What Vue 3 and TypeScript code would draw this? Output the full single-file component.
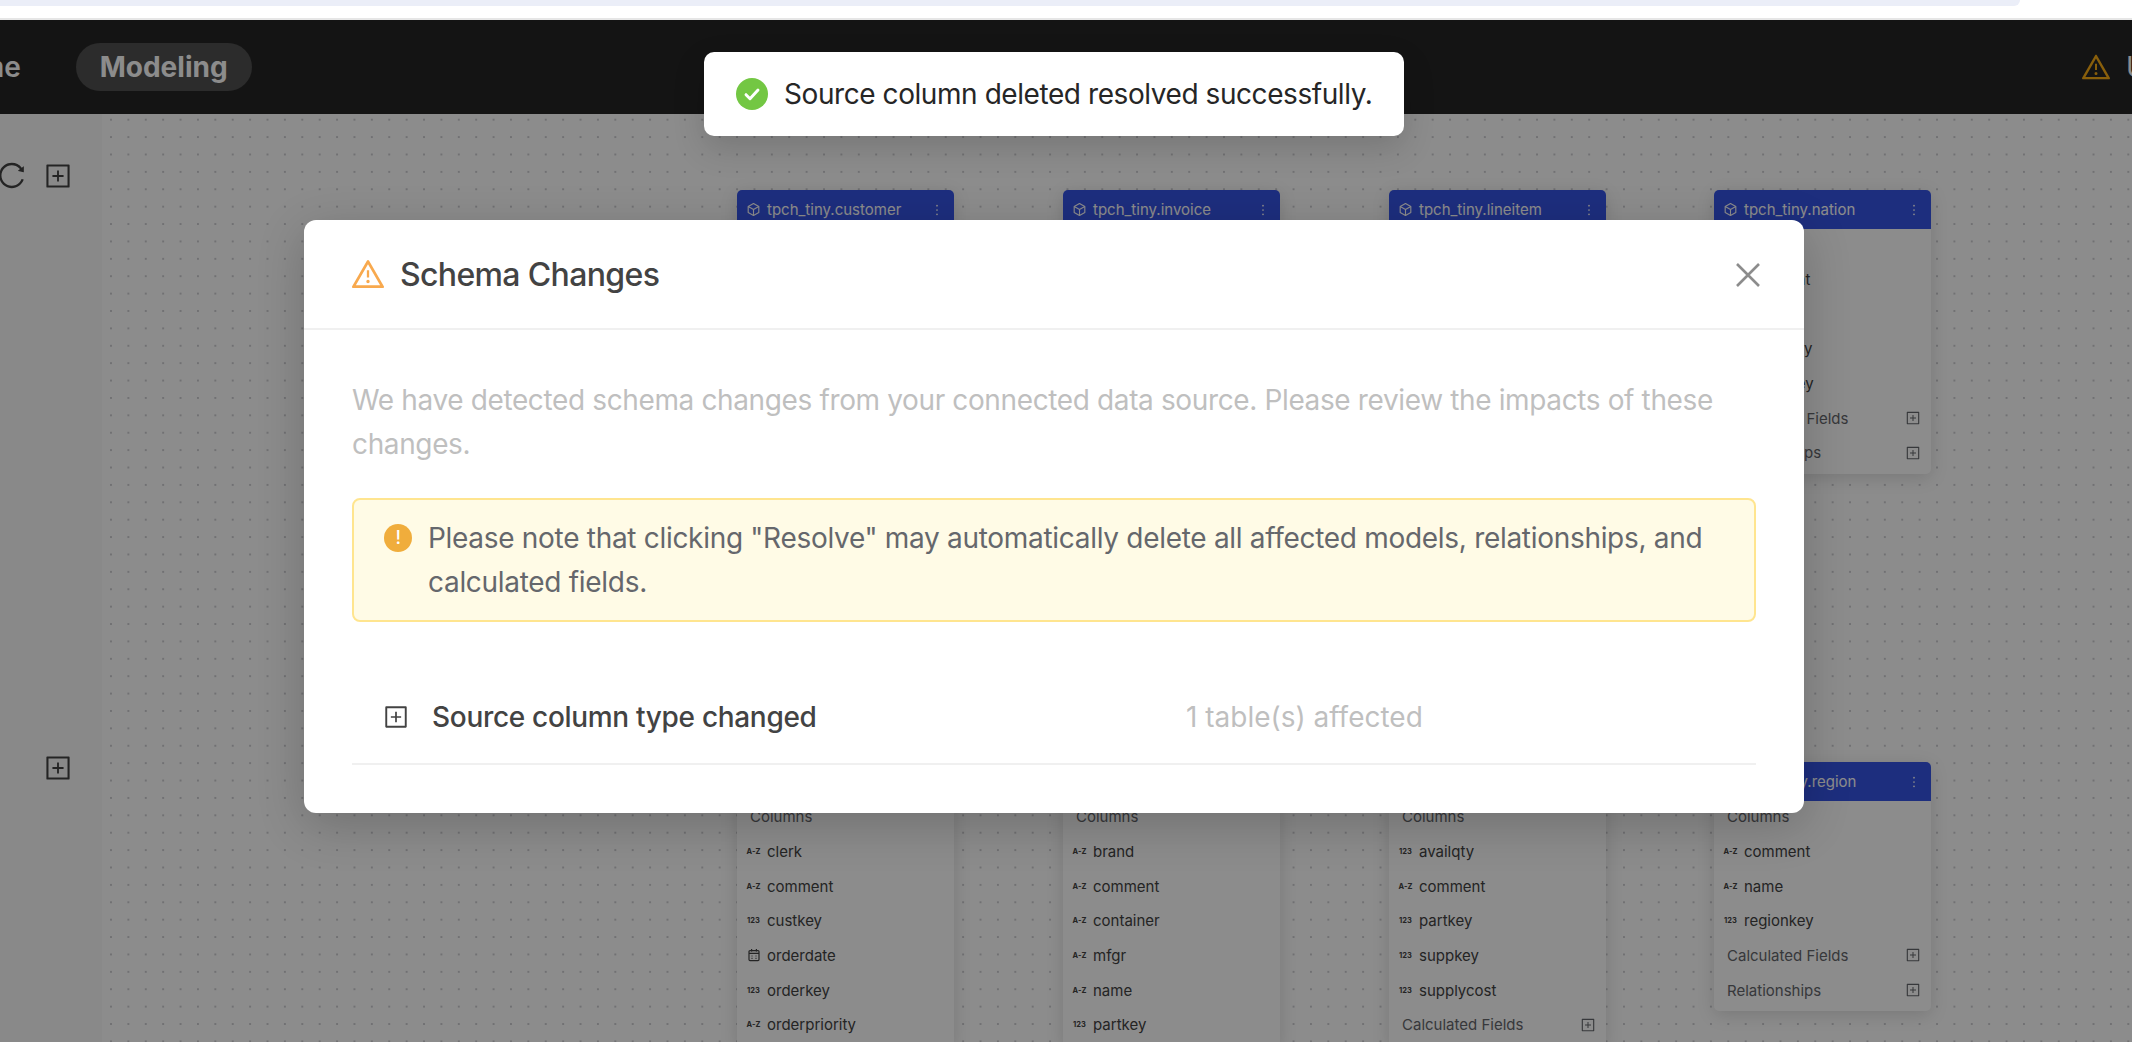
<script setup lang="ts">
interface Column {
  name: string
  type: 'text' | 'number' | 'date'
}

interface ModelNode {
  name: string
  x: number
  y: number
  columns: Column[]
  calculated: boolean
  relationships: boolean
}

const col = (name: string, type: Column['type'] = 'text'): Column => ({ name, type })

const nodes: ModelNode[] = [
  {
    name: 'tpch_tiny.customer',
    x: 635,
    y: 76,
    columns: [col('acctbal', 'number'), col('address'), col('comment'), col('custkey', 'number')],
    calculated: true,
    relationships: true,
  },
  {
    name: 'tpch_tiny.invoice',
    x: 961,
    y: 76,
    columns: [col('amount', 'number'), col('comment'), col('invoicekey', 'number')],
    calculated: true,
    relationships: true,
  },
  {
    name: 'tpch_tiny.lineitem',
    x: 1287,
    y: 76,
    columns: [col('comment'), col('discount', 'number'), col('extendedprice', 'number')],
    calculated: true,
    relationships: true,
  },
  {
    name: 'tpch_tiny.nation',
    x: 1612,
    y: 76,
    columns: [col('comment'), col('name'), col('nationkey', 'number'), col('regionkey', 'number')],
    calculated: true,
    relationships: true,
  },
  {
    name: 'tpch_tiny.orders',
    x: 635,
    y: 648,
    columns: [
      col('clerk'),
      col('comment'),
      col('custkey', 'number'),
      col('orderdate', 'date'),
      col('orderkey', 'number'),
      col('orderpriority'),
    ],
    calculated: false,
    relationships: false,
  },
  {
    name: 'tpch_tiny.part',
    x: 961,
    y: 648,
    columns: [
      col('brand'),
      col('comment'),
      col('container'),
      col('mfgr'),
      col('name'),
      col('partkey', 'number'),
    ],
    calculated: false,
    relationships: false,
  },
  {
    name: 'tpch_tiny.partsupp',
    x: 1287,
    y: 648,
    columns: [
      col('availqty', 'number'),
      col('comment'),
      col('partkey', 'number'),
      col('suppkey', 'number'),
      col('supplycost', 'number'),
    ],
    calculated: true,
    relationships: false,
  },
  {
    name: 'tpch_tiny.region',
    x: 1612,
    y: 648,
    columns: [col('comment'), col('name'), col('regionkey', 'number')],
    calculated: true,
    relationships: true,
  },
]

const plusPath =
  'M328 544h152v152c0 4.4 3.6 8 8 8h48c4.4 0 8-3.6 8-8V544h152c4.4 0 8-3.6 8-8v-48c0-4.4-3.6-8-8-8H544V328c0-4.4-3.6-8-8-8h-48c-4.4 0-8 3.6-8 8v152H328c-4.4 0-8 3.6-8 8v48c0 4.4 3.6 8 8 8zM880 112H144c-17.7 0-32 14.3-32 32v736c0 17.7 14.3 32 32 32h736c17.7 0 32-14.3 32-32V144c0-17.7-14.3-32-32-32zm-40 728H184V184h656v656z'
const warningPath =
  'M464 720a48 48 0 1096 0 48 48 0 10-96 0zm16-304v184c0 4.4 3.6 8 8 8h48c4.4 0 8-3.6 8-8V416c0-4.4-3.6-8-8-8h-48c-4.4 0-8 3.6-8 8zm475.7 440l-416-720c-6.2-10.7-16.9-16-27.7-16s-21.6 5.3-27.7 16l-416 720C56 877.4 71.4 904 96 904h832c24.6 0 40-26.6 27.7-48zm-783.5-27.9L512 239.9l339.8 588.2H172.2z'
const reloadPath =
  'M909.1 209.3l-56.4 44.1C775.8 155.1 656.2 92 521.9 92 290 92 102.3 279.5 102 511.5 101.7 743.7 289.8 932 521.9 932c181.3 0 335.8-115 394.6-276.1 1.5-4.2-.7-8.9-4.9-10.3l-56.7-19.5a8 8 0 00-10.1 4.8c-1.8 5-3.8 10-5.9 14.9-17.3 41-42.1 77.8-73.7 109.4A344.77 344.77 0 01655.9 829c-42.3 17.9-87.4 27-133.8 27-46.5 0-91.5-9.1-133.8-27A341.5 341.5 0 01279 755.2a342.16 342.16 0 01-73.7-109.4c-17.9-42.4-27-87.4-27-133.9s9.1-91.5 27-133.9c17.3-41 42.1-77.8 73.7-109.4 31.6-31.6 68.4-56.4 109.3-73.8 42.3-17.9 87.4-27 133.8-27 46.5 0 91.5 9.1 133.8 27a341.5 341.5 0 01109.3 73.8c9.9 9.9 19.2 20.4 27.8 31.4l-60.2 47a8 8 0 003 14.1l175.6 43c5 1.2 9.9-2.6 9.9-7.7l.8-180.9c-.1-6.6-7.8-10.3-13-6.2z'
</script>

<template>
  <div class="page">
    <div class="chrome">
      <div class="address-bar" />
    </div>

    <header class="topbar">
      <nav class="nav">
        <span class="nav-item">Home</span>
        <span class="nav-item active">Modeling</span>
      </nav>
      <div class="deploy">
        <svg class="deploy-icon" viewBox="64 64 896 896" fill="currentColor"><path :d="warningPath" /></svg>
        <span class="deploy-text">Undeployed changes</span>
      </div>
    </header>

    <main class="workspace">
      <aside class="sidebar">
        <div class="side-row first">
          <svg class="side-reload" viewBox="64 64 896 896" fill="currentColor"><path :d="reloadPath" /></svg>
          <svg class="side-plus" viewBox="64 64 896 896" fill="currentColor"><path :d="plusPath" /></svg>
        </div>
        <div class="side-row second">
          <svg class="side-plus" viewBox="64 64 896 896" fill="currentColor"><path :d="plusPath" /></svg>
        </div>
      </aside>

      <section class="canvas">
        <div
          v-for="node in nodes"
          :key="node.name"
          class="node"
          :style="{ left: node.x + 'px', top: node.y + 'px' }"
        >
          <div class="node-head">
            <svg class="cube" viewBox="0 0 24 24" fill="none" stroke="currentColor" stroke-width="1.8" stroke-linejoin="round">
              <path d="M12 2.5l8.5 4.8v9.4L12 21.5l-8.5-4.8V7.3z" />
              <path d="M3.5 7.3L12 12l8.5-4.7M12 12v9.5" />
            </svg>
            <span class="node-name">{{ node.name }}</span>
            <svg class="more" viewBox="0 0 4 14" fill="currentColor">
              <circle cx="2" cy="2" r="1" />
              <circle cx="2" cy="7" r="1" />
              <circle cx="2" cy="12" r="1" />
            </svg>
          </div>
          <div class="node-label columns">Columns</div>
          <div v-for="c in node.columns" :key="c.name" class="node-row">
            <span v-if="c.type === 'date'" class="type">
              <svg class="calendar" viewBox="0 0 14 14" fill="none" stroke="currentColor" stroke-width="1.2">
                <rect x="2" y="2.6" width="10" height="10" rx="1" />
                <path d="M2 5.4h10M4.6 1v2.4M9.4 1v2.4M4.5 8h1M8.5 8h1M4.5 10.3h1M8.5 10.3h1" />
              </svg>
            </span>
            <span v-else class="type">{{ c.type === 'number' ? '123' : 'A-Z' }}</span>
            <span>{{ c.name }}</span>
          </div>
          <div v-if="node.calculated" class="node-label">
            <span>Calculated Fields</span>
            <svg class="node-plus" viewBox="64 64 896 896" fill="currentColor"><path :d="plusPath" /></svg>
          </div>
          <div v-if="node.relationships" class="node-label">
            <span>Relationships</span>
            <svg class="node-plus" viewBox="64 64 896 896" fill="currentColor"><path :d="plusPath" /></svg>
          </div>
        </div>
      </section>
    </main>

    <div class="overlay">
      <div class="toast">
        <span class="toast-icon">
          <svg viewBox="0 0 24 24" fill="none" stroke="#fff" stroke-width="2.2" stroke-linecap="round" stroke-linejoin="round">
            <path d="M7.5 12.5l3 3 6-6.5" />
          </svg>
        </span>
        <span>Source column deleted resolved successfully.</span>
      </div>

      <div class="modal">
        <div class="modal-header">
          <svg class="modal-warning" viewBox="64 64 896 896" fill="currentColor"><path :d="warningPath" /></svg>
          <h2>Schema Changes</h2>
          <svg class="modal-close" viewBox="0 0 24 24" fill="none" stroke="currentColor" stroke-width="2.6">
            <path d="M1 1l22 22M23 1L1 23" />
          </svg>
        </div>
        <div class="modal-body">
          <p class="intro">
            We have detected schema changes from your connected data source. Please review the impacts of these changes.
          </p>
          <div class="alert">
            <span class="alert-icon">!</span>
            <span>Please note that clicking "Resolve" may automatically delete all affected models, relationships, and calculated fields.</span>
          </div>
          <div class="change-row">
            <svg class="change-plus" viewBox="64 64 896 896" fill="currentColor"><path :d="plusPath" /></svg>
            <span class="change-name">Source column type changed</span>
            <span class="change-count">1 table(s) affected</span>
          </div>
        </div>
      </div>
    </div>
  </div>
</template>

<style>
html,
body {
  margin: 0;
  background: #fff;
}
</style>

<style scoped>
.page {
  position: relative;
  width: 2132px;
  height: 1042px;
  display: flex;
  flex-direction: column;
  overflow: hidden;
  background: #fff;
  font-family: Inter, "Liberation Sans", sans-serif;
}

.chrome {
  height: 18px;
  flex: none;
  background: #fff;
  border-bottom: 2px solid #e6e6e6;
}

.address-bar {
  width: 2020px;
  height: 6px;
  background: #ebeef8;
  border-radius: 0 0 14px 0;
}

.topbar {
  height: 94px;
  flex: none;
  display: flex;
  align-items: center;
  background: #262626;
}

.nav {
  display: flex;
  align-items: center;
  gap: 31px;
  margin-left: -83px;
}

.nav-item {
  font-size: 28px;
  font-weight: 600;
  line-height: 48px;
  padding: 0 24px;
  border-radius: 24px;
  color: #fff;
}

.nav-item.active {
  background: #505050;
  font-weight: 700;
}

.deploy {
  margin-left: auto;
  width: 50px;
  display: flex;
  align-items: center;
  gap: 16px;
  overflow: hidden;
  white-space: nowrap;
  color: #fff;
  font-size: 28px;
}

.deploy-icon {
  width: 28px;
  height: 28px;
  flex: none;
  color: #faad14;
}

.workspace {
  flex: 1;
  display: flex;
  min-height: 0;
}

.sidebar {
  width: 102px;
  flex: none;
  background: #fafafa;
  color: #434343;
}

.side-row {
  display: flex;
  justify-content: flex-end;
  align-items: center;
  gap: 20px;
  padding-right: 31px;
}

.side-row.first {
  margin-top: 48px;
}

.side-row.second {
  margin-top: 566px;
}

.side-reload {
  width: 27px;
  height: 27px;
  margin-left: -10px;
  flex: none;
}

.side-plus {
  width: 26px;
  height: 26px;
  flex: none;
}

.canvas {
  position: relative;
  flex: 1;
  overflow: hidden;
  background-color: #fff;
  background-image: radial-gradient(#a4a4ac 0.5px, transparent 0.9px);
  background-size: 17.4px 17.4px;
  background-position: 0.3px -3px;
}

.node {
  position: absolute;
  width: 217px;
  padding-bottom: 4px;
  background: #fff;
  border-radius: 5px;
  box-shadow: 0 4px 18px rgba(0, 0, 0, 0.14);
  font-size: 15px;
  color: #434343;
}

.node-head {
  height: 39px;
  box-sizing: border-box;
  display: flex;
  align-items: center;
  padding: 0 15px 0 9px;
  background: #3654e6;
  border-radius: 5px 5px 0 0;
  color: #fff;
  font-size: 15px;
}

.cube {
  width: 15px;
  height: 15px;
  flex: none;
}

.node-name {
  margin-left: 6px;
  flex: 1;
}

.more {
  width: 4px;
  height: 12px;
  flex: none;
}

.node-label {
  height: 34.7px;
  display: flex;
  align-items: center;
  justify-content: space-between;
  padding: 0 11px 0 13px;
  color: #65676c;
}

.node-label.columns {
  height: 30px;
  padding-bottom: 3px;
}

.node-row {
  height: 34.7px;
  display: flex;
  align-items: center;
  padding-left: 9px;
}

.type {
  width: 15px;
  margin-right: 6px;
  flex: none;
  display: flex;
  justify-content: center;
  font-size: 7.5px;
  font-weight: 700;
}

.calendar {
  width: 14px;
  height: 14px;
}

.node-plus {
  width: 14px;
  height: 14px;
  flex: none;
}

.overlay {
  position: absolute;
  left: 0;
  right: 0;
  top: 20px;
  bottom: 0;
  box-sizing: border-box;
  padding: 200px 24px 0 0;
  display: flex;
  justify-content: center;
  align-items: flex-start;
  background: rgba(0, 0, 0, 0.45);
}

.toast {
  position: absolute;
  top: 32px;
  left: 704px;
  width: 700px;
  box-sizing: border-box;
  padding: 20px 32px;
  display: flex;
  align-items: center;
  gap: 16px;
  background: #fff;
  border-radius: 10px;
  font-size: 28px;
  line-height: 44px;
  letter-spacing: -0.43px;
  color: #262626;
  white-space: nowrap;
  box-shadow: 0 12px 32px rgba(0, 0, 0, 0.15);
}

.toast-icon {
  width: 32px;
  height: 32px;
  flex: none;
  border-radius: 50%;
  background: #73c743;
  display: flex;
}

.modal {
  width: 1500px;
  background: #fff;
  border-radius: 12px;
  box-shadow: 0 12px 48px rgba(0, 0, 0, 0.2);
}

.modal-header {
  height: 110px;
  box-sizing: border-box;
  display: flex;
  align-items: center;
  padding: 0 44px 0 48px;
  border-bottom: 2px solid #f0f0f0;
}

.modal-header h2 {
  margin: 0 0 0 16px;
  flex: 1;
  font-size: 32px;
  font-weight: 500;
  letter-spacing: -0.65px;
  color: #434343;
}

.modal-warning {
  width: 32px;
  height: 32px;
  flex: none;
  color: #f8a94e;
}

.modal-close {
  width: 24px;
  height: 24px;
  margin-top: 2px;
  flex: none;
  color: #8c8c8c;
}

.modal-body {
  padding: 48px;
  font-size: 28px;
  line-height: 44px;
  letter-spacing: -0.37px;
}

.intro {
  margin: 0;
  color: #bfbfbf;
}

.alert {
  margin-top: 32px;
  box-sizing: border-box;
  padding: 16px 30px;
  display: flex;
  gap: 16px;
  background: #fffbe6;
  border: 2px solid #ffe58f;
  border-radius: 8px;
  letter-spacing: -0.3px;
  color: #65676c;
}

.alert-icon {
  width: 28px;
  height: 28px;
  margin-top: 8px;
  flex: none;
  border-radius: 50%;
  background: #f0ad3c;
  color: #fff;
  font-size: 18px;
  font-weight: 500;
  line-height: 28px;
  text-align: center;
}

.change-row {
  margin-top: 49px;
  padding: 24px 0 24px 32px;
  display: flex;
  align-items: center;
  border-bottom: 2px solid #f0f0f0;
}

.change-plus {
  width: 24px;
  height: 24px;
  flex: none;
  color: #434343;
}

.change-name {
  width: 754px;
  margin-left: 24px;
  flex: none;
  font-weight: 500;
  letter-spacing: -0.31px;
  color: #434343;
}

.change-count {
  letter-spacing: 0;
  color: #bfbfbf;
}
</style>
